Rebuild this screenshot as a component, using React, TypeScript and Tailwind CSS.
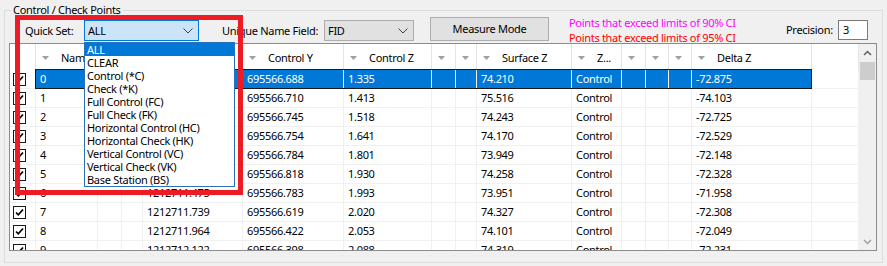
import React from "react";

type Col = { w: number; label?: string; arrow?: boolean };

const cols: Col[] = [
  { w: 26, arrow: false },
  { w: 62, label: "Name", arrow: true },
  { w: 24, arrow: true },
  { w: 21, arrow: true },
  { w: 100, label: "Control X", arrow: true },
  { w: 101, label: "Control Y", arrow: true },
  { w: 88, label: "Control Z", arrow: true },
  { w: 24, arrow: true },
  { w: 21, arrow: true },
  { w: 95, label: "Surface Z", arrow: true },
  { w: 50, label: "Z...", arrow: true },
  { w: 24, arrow: true },
  { w: 23, arrow: true },
  { w: 23, arrow: true },
  { w: 120, label: "Delta Z", arrow: true },
  { w: 47, arrow: false },
];

const rows: string[][] = [
  ["0", "1212710.958", "695566.688", "1.335", "74.210", "-72.875"],
  ["1", "1212711.012", "695566.710", "1.413", "75.516", "-74.103"],
  ["2", "1212711.096", "695566.745", "1.518", "74.243", "-72.725"],
  ["3", "1212711.183", "695566.754", "1.641", "74.170", "-72.529"],
  ["4", "1212711.265", "695566.784", "1.801", "73.949", "-72.148"],
  ["5", "1212711.370", "695566.818", "1.930", "74.258", "-72.328"],
  ["6", "1212711.475", "695566.783", "1.993", "73.951", "-71.958"],
  ["7", "1212711.739", "695566.619", "2.020", "74.327", "-72.308"],
  ["8", "1212711.964", "695566.422", "2.053", "74.101", "-72.049"],
  ["9", "1212712.122", "695566.398", "2.088", "74.319", "-72.231"],
];

const listItems = [
  "ALL",
  "CLEAR",
  "Control (*C)",
  "Check (*K)",
  "Full Control (FC)",
  "Full Check (FK)",
  "Horizontal Control (HC)",
  "Horizontal Check (HK)",
  "Vertical Control (VC)",
  "Vertical Check (VK)",
  "Base Station (BS)",
];

const SortArrow = () => (
  <svg width="7" height="4" viewBox="0 0 7 4" className="shrink-0">
    <path d="M0 0 L7 0 L3.5 4 Z" fill="#a0a0a0" />
  </svg>
);

const Chevron = () => (
  <svg width="10" height="6" viewBox="0 0 10 6">
    <path d="M0.5 0.5 L5 5 L9.5 0.5" fill="none" stroke="#404040" strokeWidth="1" />
  </svg>
);

const CheckBox = () => (
  <div className="w-[13px] h-[13px] border border-[#1a1a1a] bg-white flex items-center justify-center">
    <svg width="11" height="11" viewBox="0 0 11 11">
      <path d="M2 5.5 L4.3 7.8 L9 2.5" fill="none" stroke="#000" strokeWidth="1.7" />
    </svg>
  </div>
);

function Row({ r, selected }: { r: string[]; selected: boolean }) {
  const values: string[] = [
    "",
    r[0],
    "",
    "",
    r[1],
    r[2],
    r[3],
    "",
    "",
    r[4],
    "Control",
    "",
    "",
    "",
    r[5],
    "",
  ];
  return (
    <div className="flex h-[19px] shrink-0 relative">
      {cols.map((c, i) => {
        const sel = selected && i >= 1 && i <= 14;
        return (
          <div
            key={i}
            style={{ width: c.w }}
            className={`shrink-0 h-full border-r border-b border-[#f0f0f0] flex items-center overflow-hidden whitespace-nowrap ${
              sel ? "bg-[#0078d7] text-white" : "bg-white text-black"
            } ${i === 0 ? "pl-[3px]" : "pl-[4px]"}`}
          >
            {i === 0 ? <CheckBox /> : values[i]}
          </div>
        );
      })}
      {selected && (
        <div className="absolute left-[25px] top-[-1px] w-[777px] h-[20px] border border-[#1a1a1a] pointer-events-none" />
      )}
    </div>
  );
}

export default function App() {
  return (
    <div
      className="relative w-[887px] h-[266px] bg-[#f0f0f0] overflow-hidden text-[11px] leading-[14px] tracking-[-0.3px] text-black"
      style={{ fontFamily: '"Noto Sans", "Liberation Sans", sans-serif' }}
    >
      <div className="pt-[10px] pl-[4px]">
        {/* group box */}
        <div className="relative w-[879px] h-[253px] border border-[#dcdcdc]">
          <div className="absolute left-[6px] top-[-8px] px-[2px] bg-[#f0f0f0] leading-[14px]">
            Control / Check Points
          </div>

          {/* toolbar */}
          <div className="flex items-start h-[32px] pl-[20px]">
            <div className="shrink-0 w-[59px] mt-[13px] whitespace-nowrap">Quick Set:</div>
            <div className="shrink-0 mt-[9px] w-[115px] h-[21px] border border-[#0078d7] bg-[#cce4f7] flex items-center pl-[3px] pr-[5px] justify-between">
              <span>ALL</span>
              <Chevron />
            </div>
            <div className="shrink-0 ml-[23px] w-[102px] mt-[13px] whitespace-nowrap">Unique Name Field:</div>
            <div className="shrink-0 mt-[9px] w-[90px] h-[21px] border border-[#adadad] bg-[#e1e1e1] flex items-center pl-[3px] pr-[5px] justify-between">
              <span>FID</span>
              <Chevron />
            </div>
            <div className="shrink-0 ml-[16px] mt-[6px] w-[119px] h-[24px] border border-[#adadad] bg-[#e1e1e1] flex items-center justify-center">
              Measure Mode
            </div>
            <div className="shrink-0 ml-[20px] mt-[4px] w-[217px] leading-[15px] whitespace-nowrap">
              <div className="text-[#ff00ff]">Points that exceed limits of 90% CI</div>
              <div className="text-[#ff0000]">Points that exceed limits of 95% CI</div>
            </div>
            <div className="shrink-0 mt-[12px] w-[52px] whitespace-nowrap">Precision:</div>
            <div className="shrink-0 mt-[9px] w-[30px] h-[20px] border border-[#7a7a7a] bg-white flex items-center pl-[4px]">
              3
            </div>
          </div>

          {/* grid */}
          <div className="ml-[4px] w-[868px] h-[208px] border border-[#8c8c8c] bg-white flex">
            <div className="w-[849px] h-full overflow-hidden flex flex-col">
              {/* header */}
              <div className="flex h-[26px] shrink-0">
                {cols.map((c, i) => (
                  <div
                    key={i}
                    style={{ width: c.w }}
                    className="shrink-0 h-full border-r border-[#e5e5e5] bg-white flex items-center whitespace-nowrap overflow-hidden relative"
                  >
                    {c.arrow && (
                      <div className="absolute left-[6px] top-[12px] flex">
                        <SortArrow />
                      </div>
                    )}
                    {c.label && <span className="ml-[25px] mt-[2px]">{c.label}</span>}
                  </div>
                ))}
              </div>
              {rows.map((r, i) => (
                <Row key={i} r={r} selected={i === 0} />
              ))}
            </div>
            {/* scrollbar */}
            <div className="w-[17px] h-full bg-[#f0f0f0] flex flex-col items-center">
              <div className="h-[17px] w-full flex items-center justify-center">
                <svg width="9" height="6" viewBox="0 0 9 6">
                  <path d="M1 5 L4.5 1.5 L8 5" fill="none" stroke="#606060" strokeWidth="1.5" />
                </svg>
              </div>
              <div className="w-[15px] h-[18px] bg-[#cdcdcd] mt-[1px]" />
              <div className="flex-1" />
              <div className="h-[17px] w-full flex items-center justify-center">
                <svg width="9" height="6" viewBox="0 0 9 6">
                  <path d="M1 1 L4.5 4.5 L8 1" fill="none" stroke="#a0a0a0" strokeWidth="1.5" />
                </svg>
              </div>
            </div>
          </div>
        </div>
      </div>

      {/* dropdown list overlay */}
      <div className="absolute left-[84px] top-[42px] w-[151px] bg-white border border-[#2a6fb8] flex flex-col">
        {listItems.map((t, i) => (
          <div
            key={t}
            className={`h-[13px] leading-[13px] pl-[2px] whitespace-nowrap ${
              i === 0 ? "bg-[#0078d7] text-white" : "text-black"
            }`}
          >
            {t}
          </div>
        ))}
      </div>

      {/* red highlight rectangle */}
      <div className="absolute left-[15px] top-[15px] w-[228px] h-[180px] border-[5px] border-[#ed1c24] pointer-events-none" />
    </div>
  );
}
